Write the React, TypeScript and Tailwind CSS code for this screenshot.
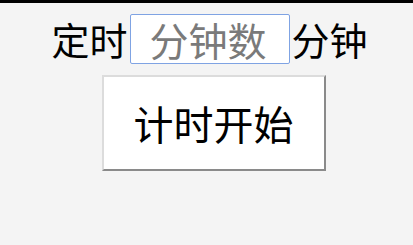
export default function App() {
  return (
    <div className="min-h-[245px] w-full bg-[#f4f4f4] font-['Noto_Sans_CJK_SC',sans-serif] text-black">
      <div className="h-[3px] w-full bg-black" />
      {/* timer row */}
      <div className="mt-[11px] flex items-center justify-center pl-[6px] text-[38px] leading-none">
        <span>定时</span>
        <input
          type="text"
          placeholder="分钟数"
          className="mx-[2px] h-[50px] w-[160px] rounded-[2px] border border-[#7fa3e3] bg-white pl-[19px] pr-[8px] text-[39px] leading-none outline-none placeholder:text-[#7a7a7a]"
        />
        <span>分钟</span>
      </div>
      <div className="mt-[11px] flex justify-center pl-[14px]">
        <button className="h-[96px] w-[224px] border-2 border-t-[#dcdcdc] border-l-[#dcdcdc] border-r-[#8a8a8a] border-b-[#8a8a8a] bg-white text-[40px] leading-none">
          计时开始
        </button>
      </div>
    </div>
  );
}
